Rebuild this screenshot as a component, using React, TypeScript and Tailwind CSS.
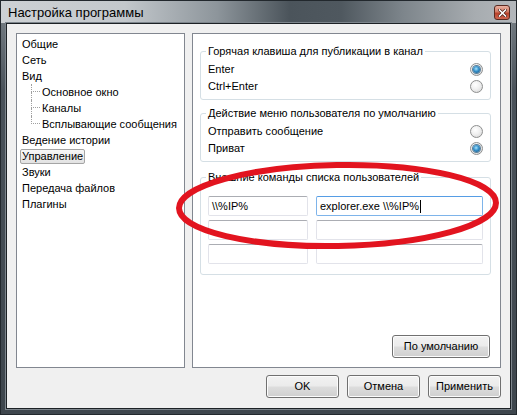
import React from "react";

type Item = { label: string; depth: 0 | 1; last?: boolean; selected?: boolean };

const treeItems: Item[] = [
  { label: "Общие", depth: 0 },
  { label: "Сеть", depth: 0 },
  { label: "Вид", depth: 0 },
  { label: "Основное окно", depth: 1 },
  { label: "Каналы", depth: 1 },
  { label: "Всплывающие сообщения", depth: 1, last: true },
  { label: "Ведение истории", depth: 0 },
  { label: "Управление", depth: 0, selected: true },
  { label: "Звуки", depth: 0 },
  { label: "Передача файлов", depth: 0 },
  { label: "Плагины", depth: 0 },
];

function Radio({ checked }: { checked?: boolean }) {
  return (
    <span className="flex h-[13px] w-[13px] shrink-0 items-center justify-center rounded-full border border-[#8e8f8f] bg-[radial-gradient(circle_at_40%_35%,#ffffff_0%,#f0f0f0_45%,#d2d2d2_100%)]">
      {checked && (
        <span className="h-[7px] w-[7px] rounded-full bg-[radial-gradient(circle_at_45%_40%,#a6e4ff_0%,#3690c9_45%,#0f4a78_100%)] shadow-[0_0_0_1px_#5a7f99]" />
      )}
    </span>
  );
}

function WinButton({ children, className = "" }: { children: React.ReactNode; className?: string }) {
  return (
    <button
      className={
        "flex h-[23px] items-center justify-center rounded-[3px] border border-[#707070] bg-[linear-gradient(to_bottom,#f2f2f2_0%,#ebebeb_48%,#dddddd_52%,#cfcfcf_100%)] text-[11px] text-black shadow-[inset_0_0_0_1px_#fcfcfc] " +
        className
      }
    >
      {children}
    </button>
  );
}

function GroupBox({
  title,
  children,
  className = "",
}: {
  title: string;
  children: React.ReactNode;
  className?: string;
}) {
  return (
    <div className={"flex flex-col rounded-[3px] border border-[#d5dfe5] " + className}>
      <span className="-mt-[8px] ml-[5px] self-start whitespace-nowrap bg-white px-[2px] leading-[14px]">{title}</span>
      {children}
    </div>
  );
}

function RadioRow({ label, checked }: { label: string; checked?: boolean }) {
  return (
    <div className="flex h-[17px] items-center justify-between pl-[7px] pr-[7px]">
      <span className="whitespace-nowrap">{label}</span>
      <Radio checked={checked} />
    </div>
  );
}

function Field({ value, focused }: { value?: string; focused?: boolean }) {
  return (
    <div
      className={
        "flex h-[20px] items-center whitespace-nowrap rounded-[2px] border pl-[3px] " +
        (focused ? "border-[#7eb4ea] border-t-[#569de5]" : "border-[#e2e3ea] border-t-[#abadb3]")
      }
    >
      {value}
      {focused && <span className="ml-[1px] h-[13px] w-[1px] bg-black" />}
    </div>
  );
}

function TreeRow({ item }: { item: Item }) {
  const label = (
    <span
      className={
        "flex h-[15px] shrink-0 items-center whitespace-nowrap rounded-[2px] border px-[1px] leading-[14px] " +
        (item.selected
          ? "border-[#a5a5a5] bg-[linear-gradient(to_bottom,#f7f7f7,#e2e2e2)]"
          : "border-transparent")
      }
    >
      {item.label}
    </span>
  );
  if (item.depth === 0) {
    return <div className="flex h-[16px] items-center pl-[3px]">{label}</div>;
  }
  return (
    <div className="flex h-[16px] items-center">
      <div className="ml-[14px] flex h-full w-[9px] shrink-0 flex-col">
        <div className="h-[8px] border-b border-l border-dotted border-[#a0a0a0]" />
        <div className={"flex-1 " + (item.last ? "" : "border-l border-dotted border-[#a0a0a0]")} />
      </div>
      {label}
    </div>
  );
}

export default function App() {
  return (
    <div className="relative h-[415px] w-[517px] overflow-hidden font-['Liberation_Sans',Arial,sans-serif] text-[11px] text-black">
      <div className="flex h-full w-full flex-col border border-[#22282d] bg-[linear-gradient(to_bottom,#7c848a_0%,#4a525a_22%,#3e464d_100%)]">
        {/* title bar */}
        <div className="flex h-[22px] shrink-0 bg-[linear-gradient(to_right,#cdd1d4_0%,#c3c8cc_24%,#8d959b_42%,#4b545b_56%,#4f585f_66%,#7d858b_78%,#a7acb0_92%,#b3b7bb_100%)] pl-[7px] pr-[6px]">
          <span className="pt-[4px] text-[13px] leading-[16px]">Настройка программы</span>
          <div className="ml-auto mt-[4px] flex h-[15px] w-[16px] items-center justify-center rounded-[3px] border border-[#5b2a21] bg-[linear-gradient(to_bottom,#eab1a2_0%,#d37a64_45%,#b9432c_55%,#cf6550_100%)]">
            <svg width="9" height="8" viewBox="0 0 9 8">
              <path d="M1.5 1 L7.5 7 M7.5 1 L1.5 7" stroke="#4a1d15" strokeWidth="3" strokeLinecap="square" />
              <path d="M1.5 1 L7.5 7 M7.5 1 L1.5 7" stroke="#ffffff" strokeWidth="1.6" strokeLinecap="square" />
            </svg>
          </div>
        </div>

        {/* client area */}
        <div className="mx-[5px] mb-[5px] flex flex-1 flex-col border border-[#1c2125] bg-[#f0f0f0] px-[9px] pb-[10px] pt-[9px] shadow-[0_0_0_1px_#7d858c]">
          <div className="flex h-[335px] gap-[7px]">
            {/* section tree */}
            <div className="flex w-[169px] flex-col border border-[#828790] bg-white pt-[2px]">
              {treeItems.map((it) => (
                <TreeRow key={it.label} item={it} />
              ))}
            </div>

            {/* settings page */}
            <div className="flex w-[309px] flex-col border border-[#828790] bg-white pb-[9px] pl-[7px] pr-[9px] pt-[17px]">
              <GroupBox title="Горячая клавиша для публикации в канал" className="pb-[4px]">
                <div className="mt-[3px]" />
                <RadioRow label="Enter" checked />
                <RadioRow label="Ctrl+Enter" />
              </GroupBox>

              <GroupBox title="Действие меню пользователя по умолчанию" className="mt-[13px] pb-[4px]">
                <div className="mt-[3px]" />
                <RadioRow label="Отправить сообщение" />
                <RadioRow label="Приват" checked />
              </GroupBox>

              <GroupBox title="Внешние команды списка пользователей" className="mt-[15px] pb-[10px]">
                <div className="mt-[12px] grid grid-cols-[100px_167px] gap-x-[8px] gap-y-[4px] px-[7px]">
                  <Field value="\\%IP%" />
                  <Field value="explorer.exe \\%IP%" focused />
                  <Field />
                  <Field />
                  <Field />
                  <Field />
                </div>
              </GroupBox>

              <div className="mt-auto flex justify-end pr-[1px]">
                <WinButton className="w-[98px]">По умолчанию</WinButton>
              </div>
            </div>
          </div>

          {/* dialog buttons */}
          <div className="mt-[7px] flex justify-end gap-[8px]">
            <WinButton className="w-[73px]">OK</WinButton>
            <WinButton className="w-[73px]">Отмена</WinButton>
            <WinButton className="w-[73px]">Применить</WinButton>
          </div>
        </div>
      </div>

      {/* hand-drawn marker ellipse */}
      <svg className="pointer-events-none absolute left-0 top-0" width="517" height="415" viewBox="0 0 517 415">
        <ellipse
          cx="337.5"
          cy="205.5"
          rx="158.5"
          ry="40.5"
          transform="rotate(-1 337.5 205.5)"
          fill="none"
          stroke="#e2141f"
          strokeWidth="6"
        />
      </svg>
    </div>
  );
}
